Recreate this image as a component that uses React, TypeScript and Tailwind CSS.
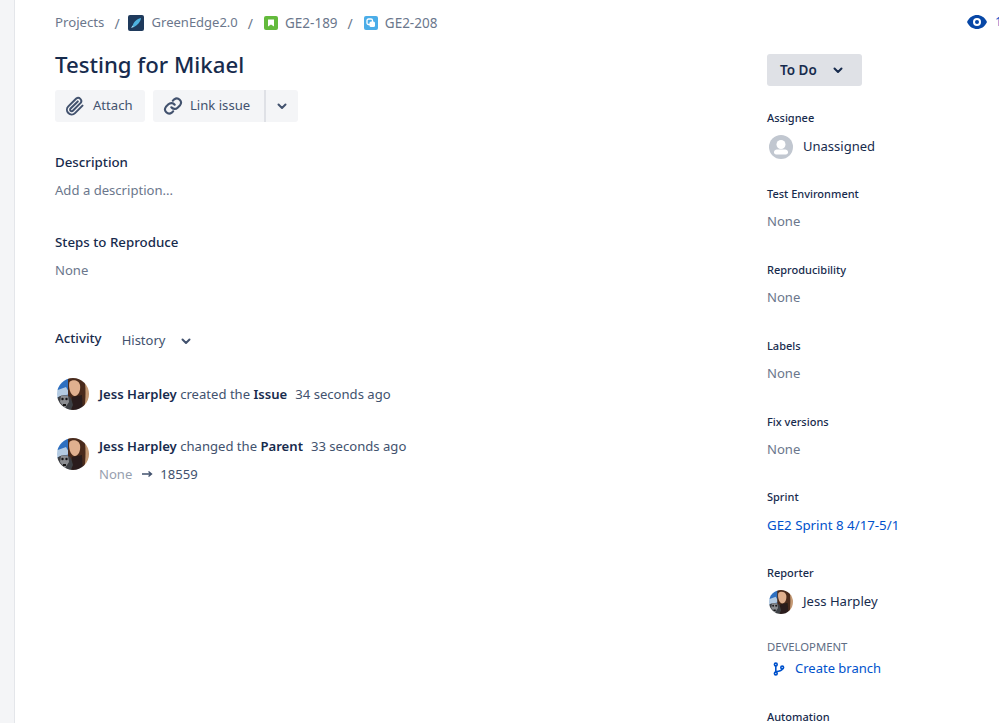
import React from "react";

function Avatar({ size, id }: { size: number; id: string }) {
  return (
    <svg width={size} height={size} viewBox="0 0 32 32" className="shrink-0">
      <defs>
        <clipPath id={id}><circle cx="16" cy="16" r="16" /></clipPath>
        <filter id={`${id}b`} x="-10%" y="-10%" width="120%" height="120%">
          <feGaussianBlur stdDeviation="0.5" />
        </filter>
      </defs>
      <g clipPath={`url(#${id})`}>
        <g filter={`url(#${id}b)`}>
          <rect x="-2" y="-2" width="36" height="36" fill="#c59a74" />
          <rect x="-2" y="-2" width="15" height="22" fill="#2f6fc0" />
          <path d="M-2 13 L9 9 L13 16 L-2 20Z" fill="#b4cbe2" />
          <path d="M11 -2 H27 C29 8 29 20 27 34 H16 L11 18 Z" fill="#4a2c1c" />
          <path d="M12.5 4 C15 1 22 1.5 23 7 C24 13 21 18.5 17.5 18 C13.5 17.5 11 9 12.5 4Z" fill="#e0b08f" />
          <path d="M15 19 L25 17 L26 34 H13Z" fill="#2a1f1a" />
          <path d="M-2 22 C2 16 11 16 14 20 L16 27 L13 34 H-2Z" fill="#3e4044" />
          <path d="M4 17.5 L11 17.5 L12 24 L8 30 L3 24Z" fill="#8a8c90" />
          <circle cx="5.5" cy="21" r="1.2" fill="#151517" />
          <circle cx="9.5" cy="21" r="1.2" fill="#151517" />
          <path d="M6 26 H9 V28 H6Z" fill="#161618" />
        </g>
      </g>
    </svg>
  );
}

function Chevron({ className = "" }: { className?: string }) {
  return (
    <svg width="10" height="7" viewBox="0 0 10 7" className={className}>
      <path d="M1.5 1.5 L5 5 L8.5 1.5" fill="none" stroke="currentColor" strokeWidth="2" strokeLinecap="round" strokeLinejoin="round" />
    </svg>
  );
}

function Clip() {
  return (
    <svg width="20" height="20" viewBox="0 0 24 24" fill="none" stroke="#42526e" strokeWidth="2.4" strokeLinecap="round" strokeLinejoin="round">
      <path d="M21 11.5l-9 9a5.6 5.6 0 0 1-8-8l9.5-9.5a3.8 3.8 0 0 1 5.3 5.3l-9.4 9.4a1.9 1.9 0 0 1-2.7-2.7l8.6-8.5" />
    </svg>
  );
}

function LinkIcon() {
  return (
    <svg width="20" height="20" viewBox="0 0 24 24" fill="none" stroke="#42526e" strokeWidth="2.5" strokeLinecap="round" strokeLinejoin="round">
      <path d="M10 13.5a5 5 0 0 0 7.5.5l3-3a5 5 0 0 0-7-7l-1.7 1.7" />
      <path d="M14 10.5a5 5 0 0 0-7.5-.5l-3 3a5 5 0 0 0 7 7l1.7-1.7" />
    </svg>
  );
}

function Sep({ className }: { className: string }) {
  return <span className={`text-[#6b778c] text-[14px] ${className}`}>/</span>;
}

function Field({ label, value, className = "" }: { label: string; value: string; className?: string }) {
  return (
    <div className={className}>
      <div className="text-[11px] leading-[16px] font-medium text-[#172b4d]">{label}</div>
      <div className="mt-[9px] text-[13.1px] leading-[20px] text-[#6b778c]">{value}</div>
    </div>
  );
}

export default function App() {
  return (
    <div className="flex h-[723px] w-[999px] overflow-hidden bg-white text-[#172b4d] [font-family:'Noto_Sans',sans-serif]">
      <div className="w-[15px] shrink-0 bg-[#f4f5f7] border-r border-[#e4e6ea]" />
      <div className="w-[712px] shrink-0 pl-[40px]">
        <div className="flex items-center h-[20px] mt-[13px] text-[13.2px] text-[#6b778c]">
          <span>Projects</span>
          <Sep className="ml-[10px] mr-[8px]" />
          <svg width="16" height="16" viewBox="0 0 16 16" className="mr-[8px]">
            <rect width="16" height="16" rx="2" fill="#1f3a5c" />
            <path d="M4.5 11.5 C5 8 8 4 13 3 C12.5 7 9 10.5 6 12Z" fill="#4fb3e0" />
            <path d="M3 13 L4.5 10.5 L6 12Z" fill="#9fdcf5" />
          </svg>
          <span className="text-[13px]">GreenEdge2.0</span>
          <Sep className="ml-[10px] mr-[11px]" />
          <svg width="14" height="14" viewBox="0 0 14 14" className="mr-[7px]">
            <rect width="14" height="14" rx="2" fill="#63ba3c" />
            <path d="M4 3.5 H10 V10.5 L7 8.5 L4 10.5Z" fill="#fff" />
          </svg>
          <span className="text-[13.5px]">GE2-189</span>
          <Sep className="ml-[10px] mr-[11px]" />
          <svg width="14" height="14" viewBox="0 0 14 14" className="mr-[7px]">
            <rect width="14" height="14" rx="2" fill="#4bade8" />
            <rect x="3" y="3" width="5.5" height="5.5" rx="1.5" fill="none" stroke="#fff" strokeWidth="1.3" />
            <rect x="5.5" y="5.5" width="5.5" height="5.5" rx="1.5" fill="#fff" />
          </svg>
          <span className="text-[13.5px]">GE2-208</span>
        </div>

        <h1 className="mt-[16px] text-[22.2px] leading-[32px] font-medium text-[#172b4d]">Testing for Mikael</h1>

        <div className="mt-[9px] flex text-[13.1px] text-[#42526e]">
          <button className="flex items-center h-[32px] w-[90px] pl-[10px] gap-[8px] rounded-[3px] bg-[#f4f5f7]">
            <Clip />
            <span>Attach</span>
          </button>
          <button className="ml-[8px] flex items-center h-[32px] w-[113px] pl-[10px] gap-[7px] rounded-l-[3px] bg-[#f4f5f7] border-r-2 border-[#dfe1e6]">
            <LinkIcon />
            <span>Link issue</span>
          </button>
          <button className="flex items-center justify-center h-[32px] w-[32px] rounded-r-[3px] bg-[#f4f5f7]">
            <Chevron />
          </button>
        </div>

        <div className="mt-[30px] text-[13.3px] leading-[20px] font-medium">Description</div>
        <div className="mt-[8px] text-[13.1px] leading-[20px] text-[#6b778c]">Add a description...</div>

        <div className="mt-[32px] text-[13.3px] leading-[20px] font-medium">Steps to Reproduce</div>
        <div className="mt-[8px] text-[13.1px] leading-[20px] text-[#6b778c]">None</div>

        <div className="mt-[51px] flex items-center h-[20px]">
          <span className="font-medium -mt-[5px] text-[13.3px]">Activity</span>
          <span className="ml-[20px] text-[#42526e] text-[13px]">History</span>
          <Chevron className="ml-[16px] text-[#42526e]" />
        </div>

        <div className="mt-[27px] flex items-start text-[13.1px] leading-[20px] text-[#42526e]">
          <div className="ml-[2px]"><Avatar size={32} id="a1" /></div>
          <div className="ml-[10px] mt-[6px]">
            <span className="font-semibold text-[#172b4d]">Jess Harpley</span> created the <span className="font-semibold text-[#172b4d]">Issue</span>
            <span className="ml-[8px]">34 seconds ago</span>
          </div>
        </div>

        <div className="mt-[26px] flex items-start text-[13.1px] leading-[20px] text-[#42526e]">
          <div className="ml-[2px] mt-[2px]"><Avatar size={32} id="a2" /></div>
          <div className="ml-[10px]">
            <div>
              <span className="font-semibold text-[#172b4d]">Jess Harpley</span> changed the <span className="font-semibold text-[#172b4d]">Parent</span>
              <span className="ml-[8px]">33 seconds ago</span>
            </div>
            <div className="mt-[8px] flex items-center">
              <span className="text-[#97a0af]">None</span>
              <svg width="12" height="8" viewBox="0 0 12 8" className="ml-[9px] mr-[7px]">
                <path d="M1 4 H10 M7.5 1.5 L10.5 4 L7.5 6.5" fill="none" stroke="#42526e" strokeWidth="1.4" />
              </svg>
              <span>18559</span>
            </div>
          </div>
        </div>
      </div>

      <div className="w-[40px] shrink-0" />

      <div className="flex-1 min-w-0 relative">
        <div className="absolute top-[12px] left-[200px] flex items-center whitespace-nowrap">
          <svg width="20" height="16" viewBox="0 0 20 16">
            <path d="M0 8 C2.5 3 6 1 10 1 C14 1 17.5 3 20 8 C17.5 13 14 15 10 15 C6 15 2.5 13 0 8Z" fill="#0747a6" />
            <circle cx="10" cy="8" r="4" fill="#fff" />
            <circle cx="10" cy="8" r="2" fill="#0747a6" />
          </svg>
          <span className="ml-[8px] text-[13px] text-[#0052cc]">1</span>
        </div>

        <button className="mt-[54px] flex items-center h-[32px] w-[95px] pl-[13px] rounded-[3px] bg-[#dfe1e6] text-[13.5px] font-semibold text-[#172b4d]">
          To Do
          <Chevron className="ml-[16px]" />
        </button>

        <div className="mt-[24px] text-[11px] leading-[16px] font-medium">Assignee</div>
        <div className="mt-[9px] flex items-center h-[24px] pl-[2px] text-[13px]">
          <svg width="24" height="24" viewBox="0 0 24 24">
            <circle cx="12" cy="12" r="12" fill="#c1c7d0" />
            <circle cx="12" cy="9.5" r="4.5" fill="#fff" />
            <path d="M5 17 C5 15 7 14.5 9 14.5 H15 C17 14.5 19 15 19 17 V17.5 C19 19 17.5 19.5 16 19.5 H8 C6.5 19.5 5 19 5 17.5Z" fill="#fff" />
          </svg>
          <span className="ml-[10px]">Unassigned</span>
        </div>

        <Field className="mt-[27px]" label="Test Environment" value="None" />
        <Field className="mt-[31px]" label="Reproducibility" value="None" />
        <Field className="mt-[31px]" label="Labels" value="None" />
        <Field className="mt-[31px]" label="Fix versions" value="None" />

        <div className="mt-[30px] text-[11px] leading-[16px] font-medium">Sprint</div>
        <div className="mt-[10px] text-[13.3px] leading-[20px] text-[#0052cc]">GE2 Sprint 8 4/17-5/1</div>

        <div className="mt-[30px] text-[11px] leading-[16px] font-medium">Reporter</div>
        <div className="mt-[9px] flex items-center h-[24px] pl-[2px] text-[13.1px]">
          <Avatar size={24} id="a3" />
          <span className="ml-[10px]">Jess Harpley</span>
        </div>

        <div className="mt-[25px] text-[11.3px] leading-[16px] text-[#5e6c84]">DEVELOPMENT</div>
        <div className="mt-[4px] flex items-center h-[20px] pl-[6px] text-[13px] text-[#0052cc]">
          <svg width="12" height="14" viewBox="0 0 12 14" fill="none" stroke="#0052cc" strokeWidth="1.6">
            <circle cx="2.8" cy="2.5" r="1.4" />
            <circle cx="2.8" cy="11.5" r="1.4" />
            <circle cx="9.2" cy="5.5" r="1.4" />
            <path d="M2.8 4 V10 M9.2 7 C9.2 9 6 9 3 10" />
          </svg>
          <span className="ml-[10px]">Create branch</span>
        </div>

        <div className="mt-[31px] text-[11px] leading-[14px] font-medium">Automation</div>
      </div>
    </div>
  );
}
